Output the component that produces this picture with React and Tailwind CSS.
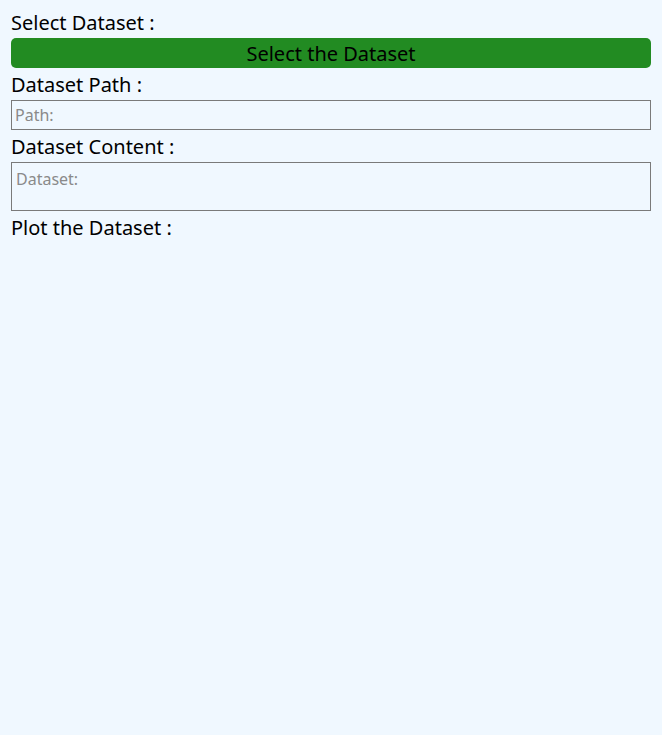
export default function App() {
  return (
    <div
      className="min-h-screen w-full bg-[#f0f8ff] px-[11px] pt-[6px] text-black"
      style={{ fontFamily: '"Noto Sans", "Open Sans", sans-serif' }}
    >
      <div className="flex h-[32px] items-center pt-[2px] text-[20px] leading-none">Select Dataset :</div>
      <button className="flex h-[30px] w-full items-center justify-center rounded-[5px] bg-[#228b22] pt-[2px] text-[20px] leading-none text-black">
        Select the Dataset
      </button>
      <div className="flex h-[32px] items-center pt-[2px] text-[20px] leading-none">Dataset Path :</div>
      <input
        className="block h-[30px] w-full border border-[#7a7a7a] bg-transparent px-[3px] text-[16px] outline-none placeholder:text-[#8a8a8a]"
        placeholder="Path:"
      />
      <div className="flex h-[32px] items-center pt-[2px] text-[20px] leading-none">Dataset Content :</div>
      <textarea
        className="block h-[49px] w-full resize-none border border-[#7a7a7a] bg-transparent px-[4px] pt-[6px] text-[16px] leading-tight outline-none placeholder:text-[#8a8a8a]"
        placeholder="Dataset:"
      />
      <div className="flex h-[32px] items-center pt-[2px] text-[20px] leading-none">Plot the Dataset&nbsp;:</div>
    </div>
  );
}
